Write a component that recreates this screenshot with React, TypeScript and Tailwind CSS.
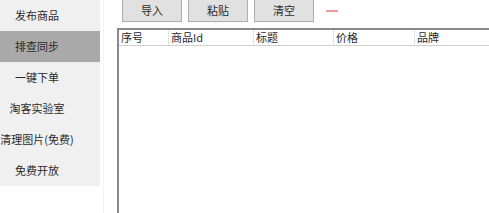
import React from "react";

const items = ["发布商品", "排查同步", "一键下单", "淘客实验室", "清理图片(免费)", "免费开放"];
const cols = [
  { t: "序号", w: "w-[50px]" },
  { t: "商品Id", w: "w-[85px]" },
  { t: "标题", w: "w-[80px]" },
  { t: "价格", w: "w-[81px]" },
  { t: "品牌", w: "w-[80px]" },
];

export default function App() {
  return (
    <div
      className="flex w-[489px] h-[213px] bg-white overflow-hidden text-[11px] text-[#2a2a2a]"
      style={{ fontFamily: '"Noto Sans CJK SC", "Noto Sans", sans-serif' }}
    >
      <div className="flex flex-col w-[100px] h-[186px] bg-[#f0f0f0] shrink-0">
        {items.map((t, i) => (
          <div
            key={t}
            className={"h-[31px] flex items-center " + (i === 1 ? "bg-[#a9a9a9]" : "")}
          >
            <div className="w-[74px] flex justify-center leading-none whitespace-nowrap">{t}</div>
          </div>
        ))}
      </div>
      <div className="w-[3px] shrink-0" />
      <div className="w-[1px] bg-[#f3f3f3] shrink-0" />
      <div className="flex-1 flex flex-col pl-[13px]">
        <div className="flex items-center h-[28px] pb-[6px]">
          <div className="flex items-center gap-[6px] pl-[5px] h-[22px]">
            {["导入", "粘贴", "清空"].map((b) => (
              <div
                key={b}
                className="w-[60px] h-[22px] bg-[#e1e1e1] border border-[#adadad] border-t-0 flex items-center justify-center leading-none"
              >
                {b}
              </div>
            ))}
            <div className="ml-[6px] w-[12px] h-[2px] bg-[#f39a9a]" />
          </div>
        </div>
        <div className="flex-1 border-t-2 border-l-2 border-[#8a8a8a]">
          <div className="flex h-[16px] border-b border-[#d0d0d0]">
            {cols.map((c) => (
              <div
                key={c.t}
                className={c.w + " shrink-0 border-r border-[#e3e3e3] pl-[2px] flex items-center leading-none"}
              >
                {c.t}
              </div>
            ))}
          </div>
        </div>
      </div>
    </div>
  );
}
